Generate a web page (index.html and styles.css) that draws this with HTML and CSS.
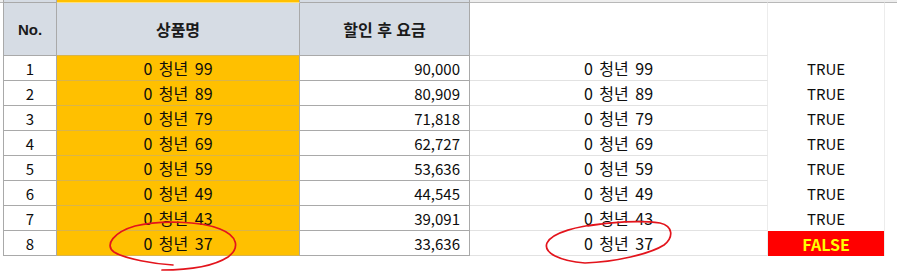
FILE: index.html
```html
<!DOCTYPE html>
<html lang="ko">
<head>
<meta charset="utf-8">
<title>할인 후 요금</title>
<link rel="stylesheet" href="styles.css">
</head>
<body>
<div class="page">
  <div class="sheet">
    <div class="cell pad top"></div>
    <div class="cell ca hdr top"></div>
    <div class="cell cb top topb"></div>
    <div class="cell cc hdr top"></div>
    <div class="cell cd top"></div>
    <div class="cell ce top"></div>
    <div class="cell cf top"></div>

    <div class="cell pad"></div>
    <div class="cell ca hdr hA">No.</div>
    <div class="cell cb hdr hB">상품명</div>
    <div class="cell cc hdr hC">할인 후 요금</div>
    <div class="cell cd"></div>
    <div class="cell ce"></div>
    <div class="cell cf"></div>

    <div class="cell pad"></div><div class="cell ca">1</div><div class="cell cb ko">0 청년 99</div><div class="cell cc num">90,000</div><div class="cell cd ko">0 청년 99</div><div class="cell ce">TRUE</div><div class="cell cf"></div>
    <div class="cell pad"></div><div class="cell ca">2</div><div class="cell cb ko">0 청년 89</div><div class="cell cc num">80,909</div><div class="cell cd ko">0 청년 89</div><div class="cell ce">TRUE</div><div class="cell cf"></div>
    <div class="cell pad"></div><div class="cell ca">3</div><div class="cell cb ko">0 청년 79</div><div class="cell cc num">71,818</div><div class="cell cd ko">0 청년 79</div><div class="cell ce">TRUE</div><div class="cell cf"></div>
    <div class="cell pad"></div><div class="cell ca">4</div><div class="cell cb ko">0 청년 69</div><div class="cell cc num">62,727</div><div class="cell cd ko">0 청년 69</div><div class="cell ce">TRUE</div><div class="cell cf"></div>
    <div class="cell pad"></div><div class="cell ca">5</div><div class="cell cb ko">0 청년 59</div><div class="cell cc num">53,636</div><div class="cell cd ko">0 청년 59</div><div class="cell ce">TRUE</div><div class="cell cf"></div>
    <div class="cell pad"></div><div class="cell ca">6</div><div class="cell cb ko">0 청년 49</div><div class="cell cc num">44,545</div><div class="cell cd ko">0 청년 49</div><div class="cell ce">TRUE</div><div class="cell cf"></div>
    <div class="cell pad"></div><div class="cell ca">7</div><div class="cell cb ko">0 청년 43</div><div class="cell cc num">39,091</div><div class="cell cd ko">0 청년 43</div><div class="cell ce">TRUE</div><div class="cell cf"></div>
    <div class="cell pad"></div><div class="cell ca">8</div><div class="cell cb ko">0 청년 37</div><div class="cell cc num">33,636</div><div class="cell cd ko">0 청년 37</div><div class="cell ce false">FALSE</div><div class="cell cf"></div>
  </div>

  <svg class="marks" width="897" height="274" viewBox="0 0 897 274" aria-hidden="true">
    <path d="M173,265 C155,264 125,259 114,252 C104,245 114,232 135,226 C160,220 200,221 220,229 C238,236 240,248 228,257 C214,266 190,270 162,270" />
    <path d="M600,224 C580,226 552,232 547,243 C543,253 560,261 585,263 C615,262 650,254 664,245 C674,237 673,226 660,223 C640,220 610,222 588,226" />
  </svg>
</div>
</body>
</html>
```

FILE: styles.css
```css
html, body {
  margin: 0;
  padding: 0;
  background: #ffffff;
}

.page {
  position: relative;
  width: 897px;
  height: 274px;
  overflow: hidden;
}

.sheet {
  display: grid;
  grid-template-columns: 3px 54px 243px 170px 298px 117px 12px;
  grid-template-rows: 3px 53px repeat(8, 25px);
  font-family: "Noto Sans CJK KR", "Noto Sans", sans-serif;
  font-size: 15px;
  color: #0d0d0d;
}

.cell {
  box-sizing: border-box;
  display: flex;
  align-items: center;
  justify-content: center;
  white-space: nowrap;
  line-height: 1;
  overflow: hidden;
}

.ko {
  font-size: 16px;
  word-spacing: 2px;
}

.ca {
  border-left: 1px solid #a9a9a9;
  border-right: 1px solid #a9a9a9;
  border-bottom: 1px solid #a9a9a9;
}

.cb {
  background: #ffc000;
  border-right: 1px solid #a9a9a9;
  border-bottom: 1px solid #d9b44a;
}

.cc {
  border-right: 1px solid #a9a9a9;
  border-bottom: 1px solid #a9a9a9;
}

.cd {
  border-right: 1px solid #ececec;
  border-bottom: 1px solid #e2e2e2;
}

.ce {
  border-right: 1px solid #ececec;
}

.top {
  background: #eeeeee;
  border-bottom: 1px solid #b8b8b8;
}

.top.hdr {
  background: #d6dce4;
  border-bottom: 1px solid #a9a9a9;
}

.topb {
  background: #ffc000;
  border-bottom: 1px solid #ffe07a;
}

.hdr {
  background: #d6dce4;
  font-weight: bold;
  color: #1a1a1a;
}

.hA {
  font-family: "Liberation Sans", Arial, sans-serif;
  font-size: 15px;
}

.hB,
.hC {
  font-size: 16px;
}

.num {
  justify-content: flex-end;
  padding-right: 9px;
}

.false {
  background: #ff0000;
  color: #ffff00;
  font-weight: bold;
  font-size: 16px;
}

.marks {
  position: absolute;
  left: 0;
  top: 0;
  pointer-events: none;
}

.marks path {
  fill: none;
  stroke: #e3141c;
  stroke-width: 1.7;
  stroke-linecap: round;
  stroke-linejoin: round;
}
```
